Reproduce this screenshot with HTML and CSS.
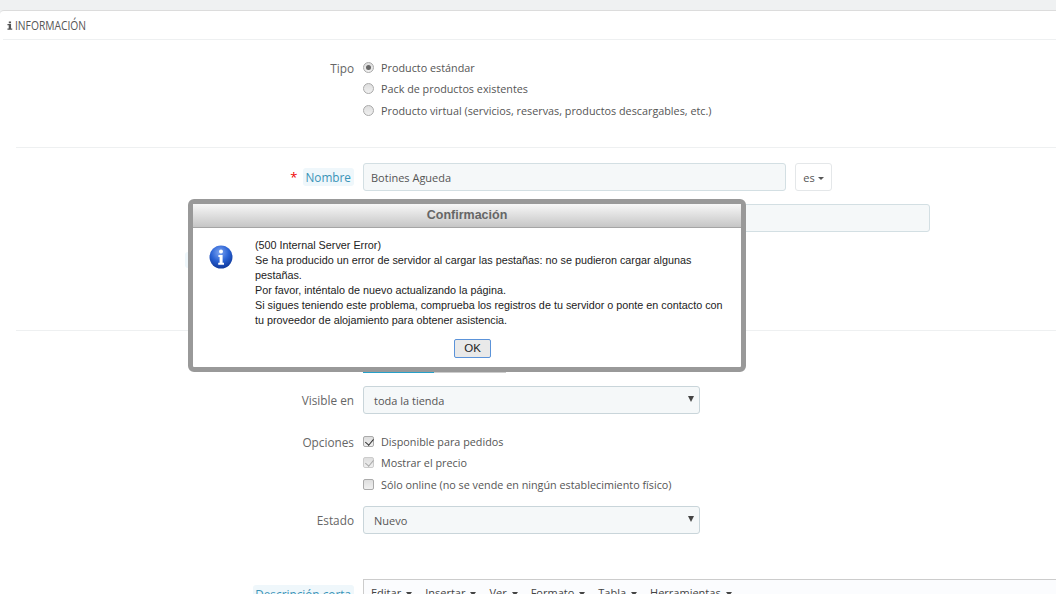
FILE: index.html
```html
<!DOCTYPE html>
<html lang="es">
<head>
<meta charset="utf-8">
<title>Información</title>
<link rel="stylesheet" href="styles.css">
</head>
<body>
<div class="page">
  <section class="panel">
    <h3 class="panel-heading">
      <svg class="head-icon" viewBox="0 0 8 11" width="6" height="11"><path d="M2.4 0h3v2.4h-3zM.6 3.6h4.8v5.8h1.6V11H.6V9.4h1.7V5.2H.6z" fill="#555"/></svg>
      <span class="head-text">INFORMACIÓN</span>
    </h3>

    <div class="row row-type">
      <div class="label">Tipo</div>
      <div class="control options">
        <div class="opt"><span class="radio on"></span><span>Producto estándar</span></div>
        <div class="opt"><span class="radio"></span><span>Pack de productos existentes</span></div>
        <div class="opt"><span class="radio"></span><span>Producto virtual (servicios, reservas, productos descargables, etc.)</span></div>
      </div>
    </div>

    <hr class="divider">

    <div class="row row-name">
      <div class="label"><span class="req">*</span><span class="pill">Nombre</span></div>
      <div class="control lang">
        <input class="field name-field" type="text" value="Botines Agueda">
        <button class="lang-btn" type="button">es<i class="caret"></i></button>
      </div>
    </div>
    <div class="row row-ref">
      <div class="label"></div>
      <div class="control"><input class="field ref-field" type="text"></div>
    </div>
    <div class="row row-hidden">
      <div class="label"><span class="pill pill-wide">&nbsp;</span></div>
    </div>

    <hr class="divider second">

    <div class="row row-tabs">
      <div class="label"></div>
      <div class="control tabs"><span class="tab active"></span><span class="tab"></span></div>
    </div>

    <div class="row row-visible">
      <div class="label">Visible en</div>
      <div class="control"><div class="select">toda la tienda</div></div>
    </div>

    <div class="row row-options">
      <div class="label">Opciones</div>
      <div class="control options">
        <div class="opt"><span class="check on"></span><span>Disponible para pedidos</span></div>
        <div class="opt"><span class="check on disabled"></span><span>Mostrar el precio</span></div>
        <div class="opt"><span class="check"></span><span>Sólo online (no se vende en ningún establecimiento físico)</span></div>
      </div>
    </div>

    <div class="row row-state">
      <div class="label">Estado</div>
      <div class="control"><div class="select">Nuevo</div></div>
    </div>

    <div class="row row-desc">
      <div class="label"><span class="pill">Descripción corta</span></div>
      <div class="control editor">
        <span class="menu">Editar<i class="arrow"></i></span>
        <span class="menu">Insertar<i class="arrow"></i></span>
        <span class="menu">Ver<i class="arrow"></i></span>
        <span class="menu">Formato<i class="arrow"></i></span>
        <span class="menu">Tabla<i class="arrow"></i></span>
        <span class="menu">Herramientas<i class="arrow"></i></span>
      </div>
    </div>
  </section>

  <div class="dialog" role="dialog">
    <div class="dialog-title">Confirmación</div>
    <div class="dialog-body">
      <svg class="dialog-icon" viewBox="0 0 24 24" width="24" height="24">
        <defs>
          <radialGradient id="ball" cx="45%" cy="30%" r="70%">
            <stop offset="0" stop-color="#7fa6f2"/>
            <stop offset=".55" stop-color="#2a62d4"/>
            <stop offset="1" stop-color="#103a9c"/>
          </radialGradient>
        </defs>
        <circle cx="12" cy="12" r="11.5" fill="url(#ball)"/>
        <circle cx="12" cy="6.4" r="2" fill="#fff"/>
        <path d="M9.4 10h4.2v7.8h1.4v2H9.2v-2h1.4v-5.8H9.4z" fill="#fff"/>
      </svg>
      <p class="dialog-text">(500 Internal Server Error)<br>Se ha producido un error de servidor al cargar las pestañas: no se pudieron cargar algunas pestañas.<br>Por favor, inténtalo de nuevo actualizando la página.<br>Si sigues teniendo este problema, comprueba los registros de tu servidor o ponte en contacto con tu proveedor de alojamiento para obtener asistencia.</p>
    </div>
    <div class="dialog-actions"><button class="ok" type="button">OK</button></div>
  </div>
</div>
</body>
</html>
```
FILE: styles.css
```css
* { box-sizing: border-box; }
html, body { margin: 0; height: 594px; overflow: hidden; background: #eff1f2; }
.page {
  position: relative;
  height: 594px;
  overflow: hidden;
  padding-top: 10px;
  font-family: "Open Sans", sans-serif;
  font-size: 11px;
  color: #555;
}
.panel {
  background: #fff;
  border-top: 1px solid #dcdcdc;
  border-top-left-radius: 4px;
  height: 600px;
}
.panel-heading {
  display: flex;
  align-items: center;
  gap: 2px;
  height: 29px;
  margin: 0 0 0 3px;
  padding: 0 0 0 4px;
  border-bottom: 1px solid #eef0f1;
  font-weight: 400;
  font-size: 13px;
  color: #555;
}
.head-text {
  display: inline-block;
  transform: scaleX(.79);
  transform-origin: left center;
}
.row { display: flex; }
.label {
  flex: 0 0 354px;
  text-align: right;
  font-size: 11.8px;
  line-height: 18px;
  color: #666;
}
.control { margin-left: 9px; }
.options { display: flex; flex-direction: column; gap: 3.5px; font-size: 10.8px; }
.opt { display: flex; align-items: center; gap: 7px; height: 18px; color: #555; }
.radio, .check {
  flex: none;
  position: relative;
  width: 11px;
  height: 11px;
  background: linear-gradient(#dedede, #f0f0f0);
  border: 1px solid #aaa;
}
.radio { border-radius: 50%; }
.radio.on::after {
  content: "";
  position: absolute;
  inset: 2px;
  border-radius: 50%;
  background: #666;
}
.check { border-radius: 2px; }
.check.on::after {
  content: "";
  position: absolute;
  left: 3px;
  top: 0;
  width: 3.5px;
  height: 7px;
  border: solid #333;
  border-width: 0 1.8px 1.8px 0;
  transform: rotate(40deg);
}
.check.disabled { border-color: #ccc; }
.check.disabled::after { border-color: #aaa; }
.row-type { padding-top: 18px; }
.row-type .label, .row-options .label { padding-top: 1px; }
.divider { border: 0; border-top: 1px solid #eef0f1; margin: 28px 0 15px 16px; }
.divider.second { margin-top: 0; margin-bottom: 0; }
.field {
  display: block;
  height: 28px;
  padding: 0 7px;
  border: 1px solid #d3dfe3;
  border-radius: 3px;
  background: #f5f8f9;
  font-family: "Open Sans", sans-serif;
  font-size: 11px;
  color: #555;
}
.name-field { width: 423px; }
.ref-field { width: 567px; }
.lang { display: flex; gap: 9px; }
.lang-btn {
  width: 37px;
  height: 28px;
  padding: 0;
  border: 1px solid #e4e7e9;
  border-radius: 3px;
  background: #fff;
  font-family: "Open Sans", sans-serif;
  font-size: 11px;
  color: #555;
}
.caret {
  display: inline-block;
  margin-left: 3px;
  vertical-align: middle;
  border-top: 3px solid #555;
  border-left: 3px solid transparent;
  border-right: 3px solid transparent;
}
.row-name .label { line-height: 28px; }
.req { color: #e00; margin-right: 6px; font-size: 13px; }
.pill {
  display: inline-block;
  padding: 0 3px 0 2px;
  border-radius: 3px;
  background: #eff7fb;
  color: #3a94b8;
  line-height: 18px;
}
.pill-wide { width: 169px; height: 16px; }
.row-ref { margin-top: 13px; }
.row-hidden { margin-top: 20px; height: 78px; }
.row-tabs { height: 55px; align-items: flex-start; }
.tabs { display: flex; margin-left: 9px; margin-top: 39px; }
.tab { width: 72px; height: 3px; background: #ccc; }
.tab.active { width: 71px; background: #25a0c9; }
.select {
  position: relative;
  width: 337px;
  height: 28px;
  padding: 0 10px;
  border: 1px solid #c9d5da;
  border-radius: 3px;
  background: #f5f8f9;
  line-height: 27px;
  color: #555;
}
.select::after {
  content: "";
  position: absolute;
  right: 5px;
  top: 9px;
  border-top: 6px solid #444;
  border-left: 3px solid transparent;
  border-right: 3px solid transparent;
}
.row-visible .label, .row-state .label { line-height: 28px; }
.row-options { margin-top: 18px; }
.row-state { margin-top: 13px; }
.row-desc { margin-top: 45px; }
.row-desc .label { padding-top: 6px; }
.editor {
  flex: 1;
  display: flex;
  gap: 13px;
  height: 40px;
  padding: 4px 7px;
  border: 1px solid #ccc;
  border-right: 0;
  background: #fbfcfe;
  color: #444;
  line-height: 18px;
}
.arrow {
  display: inline-block;
  margin-left: 5px;
  vertical-align: middle;
  border-top: 4px solid #444;
  border-left: 3.5px solid transparent;
  border-right: 3.5px solid transparent;
}
.dialog {
  position: absolute;
  left: 188px;
  top: 199px;
  width: 558px;
  height: 173px;
  border: 5px solid #999;
  border-radius: 6px;
  background: #fff;
  font-family: "Liberation Sans", Arial, sans-serif;
  color: #222;
}
.dialog-title {
  height: 24px;
  border-bottom: 1px solid #a5a5a5;
  background: linear-gradient(#f7f7f7, #c6c6c6);
  text-align: center;
  font-size: 12.5px;
  font-weight: 700;
  line-height: 23px;
  color: #666;
}
.dialog-body { display: flex; padding-top: 10px; }
.dialog-icon { flex: none; margin: 7px 0 0 16px; }
.dialog-text {
  margin: 0 0 0 22px;
  width: 473px;
  font-size: 10.8px;
  line-height: 15.1px;
}
.dialog-actions { display: flex; justify-content: center; margin-top: 10px; padding-left: 11px; }
.ok {
  width: 37px;
  height: 19px;
  padding: 0;
  border: 1px solid #5b93d9;
  border-radius: 2px;
  background: #e9e9e9;
  font-family: "Liberation Sans", Arial, sans-serif;
  font-size: 11.5px;
  color: #222;
}
```
